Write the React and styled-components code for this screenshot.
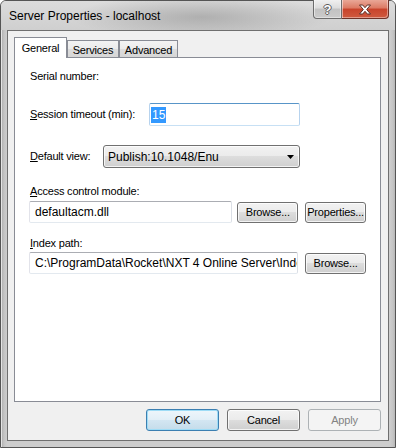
import React from 'react';
import styled, { createGlobalStyle, css } from 'styled-components';

const Global = createGlobalStyle`
  html, body { margin: 0; padding: 0; background: #fff; }
  body { font-family: "Liberation Sans", Arial, sans-serif; }
`;

const Window = styled.div`
  box-sizing: border-box;
  width: 396px;
  height: 448px;
  border: 1px solid #555;
  border-radius: 6px 6px 0 0;
  padding: 0 6px 6px;
  display: flex;
  flex-direction: column;
  background: linear-gradient(90deg, #a9a9a9 0px, #c4c4c4 3px, #cdcdcd 6px, #cdcdcd 389px, #c4c4c4 392px, #a9a9a9 396px);
  box-shadow: inset 1px 1px 0 #e4e4e4;
`;

const TitleBar = styled.div`
  height: 29px;
  display: flex;
  align-items: center;
  margin: 0 -6px;
  padding: 0 0 0 7px;
  background:
    radial-gradient(ellipse 130px 22px at 200px 16px, rgba(130,130,130,0.45), rgba(130,130,130,0) 100%),
    linear-gradient(180deg, #dcdcdc, #cfcfcf);
  border-radius: 5px 5px 0 0;
`;

const Title = styled.span`
  font-size: 12px;
  color: #000;
  padding-left: 1px;
`;

const Captions = styled.div`
  margin-left: auto;
  margin-right: 6px;
  align-self: flex-start;
  display: flex;
  margin-top: -1px;
`;

const CaptionButton = styled.div`
  box-sizing: border-box;
  height: 19px;
  width: ${p => p.$w}px;
  border: 1px solid ${p => (p.$close ? '#6e3228' : '#6c6c6c')};
  border-top: none;
  display: flex;
  align-items: center;
  justify-content: center;
  box-shadow: inset 1px 0 0 rgba(255,255,255,0.5), inset -1px -1px 0 rgba(255,255,255,0.4);
  ${p => (p.$close
    ? css`
      border-left: none;
      border-radius: 0 0 4px 0;
      background: linear-gradient(180deg, #e9a797 0%, #dc7a63 45%, #c8432b 50%, #cf5a3f 100%);
    `
    : css`
      border-radius: 0 0 0 4px;
      background: linear-gradient(180deg, #f0f0f0 0%, #dcdcdc 45%, #c2c2c2 50%, #cbcbcb 100%);
    `)}
`;

const HelpGlyph = styled.span`
  font-family: "Liberation Sans", Arial, sans-serif;
  font-weight: bold;
  font-size: 13px;
  line-height: 13px;
  color: #fff;
  text-shadow: 1px 0 0 #5c5c5c, -1px 0 0 #5c5c5c, 0 1px 0 #5c5c5c, 0 -1px 0 #5c5c5c;
  margin-top: 1px;
`;

const Client = styled.div`
  flex: 1;
  border: 1px solid #6f6f6f;
  background: #f0f0f0;
  padding: 6px 7px 9px 6px;
  display: flex;
  flex-direction: column;
  min-height: 0;
`;

const TabStrip = styled.div`
  display: flex;
  align-items: flex-end;
  height: 21px;
  margin-bottom: -1px;
  position: relative;
  z-index: 1;
`;

const Tab = styled.div`
  box-sizing: border-box;
  width: ${p => p.$w}px;
  margin-left: ${p => p.$ml || 0}px;
  border: 1px solid #898c95;
  font-size: 11px;
  letter-spacing: -0.2px;
  color: #000;
  display: flex;
  align-items: center;
  justify-content: center;
  ${p => (p.$active
    ? css`
      height: 21px;
      border-bottom: none;
      background: #fff;
      padding-bottom: 1px;
    `
    : css`
      height: 18px;
      background: linear-gradient(180deg, #f3f3f3 0%, #ebebeb 50%, #dddddd 51%, #d6d6d6 100%);
      padding-top: 1px;
    `)}
`;

const Panel = styled.div`
  flex: 1;
  background: #fff;
  border: 1px solid #898c95;
  padding: 0 14px;
  display: flex;
  flex-direction: column;
`;

const Label = styled.span`
  font-size: 11px;
  letter-spacing: -0.2px;
  line-height: 13px;
  color: #000;
  padding-left: 1px;
  margin-top: ${p => p.$mt || 0}px;
  width: ${p => (p.$w ? `${p.$w}px` : 'auto')};
  flex: none;
  box-sizing: border-box;
`;

const Row = styled.div`
  display: flex;
  align-items: center;
  margin-top: ${p => p.$mt}px;
`;

const TextBox = styled.div`
  box-sizing: border-box;
  width: ${p => p.$w}px;
  height: ${p => p.$h || 22}px;
  margin-right: ${p => p.$mr || 0}px;
  border: 1px solid;
  border-color: #abadb3 #dbdfe6 #e3e9ef #e2e3ea;
  border-radius: 2px;
  background: #fff;
  font-size: 12px;
  color: #000;
  padding-left: 5px;
  display: flex;
  align-items: center;
  white-space: nowrap;
  overflow: hidden;
  ${p => p.$focus && css`
    border-color: #5895c8 #b7d3ee #c7e0f4 #b7d3ee;
    padding-left: 1px;
  `}
`;

const Selected = styled.span`
  background: #3399ff;
  color: #fff;
  padding: 1px 1px;
  line-height: 14px;
`;

const Combo = styled.div`
  box-sizing: border-box;
  width: 197px;
  height: 23px;
  border: 1px solid #707070;
  border-radius: 3px;
  background: linear-gradient(180deg, #f2f2f2 0%, #ebebeb 49%, #dddddd 50%, #cfcfcf 100%);
  box-shadow: inset 0 0 0 1px rgba(255,255,255,0.75);
  display: flex;
  align-items: center;
  padding: 0 5px 0 4px;
  font-size: 12px;
  color: #000;
`;

const ComboText = styled.span`
  flex: 1;
  padding-top: 1px;
`;

const Button = styled.button`
  box-sizing: border-box;
  width: ${p => p.$w}px;
  height: ${p => p.$h}px;
  margin-left: ${p => p.$ml || 0}px;
  padding: 0;
  font-family: "Liberation Sans", Arial, sans-serif;
  font-size: 11px;
  letter-spacing: -0.2px;
  color: #000;
  border: 1px solid #707070;
  border-radius: 3px;
  background: linear-gradient(180deg, #f2f2f2 0%, #ebebeb 49%, #dddddd 50%, #cfcfcf 100%);
  box-shadow: inset 0 0 0 1px rgba(255,255,255,0.75);
  ${p => p.$default && css`
    border-color: #3c7fb1;
    background: linear-gradient(180deg, #eef6fb 0%, #e2eff7 49%, #d3e6f2 50%, #c4dcea 100%);
    box-shadow: inset 0 0 0 1px #9edcf6;
  `}
  ${p => p.disabled && css`
    border-color: #adb2b5;
    background: #f4f4f4;
    color: #838383;
    box-shadow: none;
  `}
`;

const Footer = styled.div`
  display: flex;
  justify-content: flex-end;
  margin-top: 7px;
`;

function CloseGlyph() {
  return (
    <svg width="14" height="11" viewBox="-1.5 -1 14 11">
      <polygon
        points="0,0 3.2,0 5.5,2.7 7.8,0 11,0 7.2,4.5 11,9 7.8,9 5.5,6.3 3.2,9 0,9 3.8,4.5"
        fill="#fff"
        stroke="#5b3028"
        strokeWidth="1"
        strokeLinejoin="round"
      />
    </svg>
  );
}

function DropArrow() {
  return (
    <svg width="7" height="4" viewBox="0 0 7 4">
      <polygon points="0,0 7,0 3.5,4" fill="#000" />
    </svg>
  );
}

export default function App() {
  return (
    <>
      <Global />
      <Window>
        <TitleBar>
          <Title>Server Properties - localhost</Title>
          <Captions>
            <CaptionButton $w={29}><HelpGlyph>?</HelpGlyph></CaptionButton>
            <CaptionButton $w={47} $close><CloseGlyph /></CaptionButton>
          </Captions>
        </TitleBar>
        <Client>
          <TabStrip>
            <Tab $w={53} $active>General</Tab>
            <Tab $w={52}>Services</Tab>
            <Tab $w={59} $ml={0}>Advanced</Tab>
          </TabStrip>
          <Panel>
            <Label $mt={12}>Serial number:</Label>
            <Row $mt={20}>
              <Label $w={120}><u>S</u>ession timeout (min):</Label>
              <TextBox $w={151} $h={23} $focus><Selected>15</Selected></TextBox>
            </Row>
            <Row $mt={19}>
              <Label $w={74}><u>D</u>efault view:</Label>
              <Combo>
                <ComboText>Publish:10.1048/Enu</ComboText>
                <DropArrow />
              </Combo>
            </Row>
            <Label $mt={17}><u>A</u>ccess control module:</Label>
            <Row $mt={3}>
              <TextBox $w={204}>defaultacm.dll</TextBox>
              <Button $w={61} $h={21} $ml={5}>Browse...</Button>
              <Button $w={61} $h={21} $ml={7}>Properties...</Button>
            </Row>
            <Label $mt={14}><u>I</u>ndex path:</Label>
            <Row $mt={2}>
              <TextBox $w={270}>C:\ProgramData\Rocket\NXT 4 Online Server\Index</TextBox>
              <Button $w={61} $h={21} $ml={7}>Browse...</Button>
            </Row>
          </Panel>
          <Footer>
            <Button $w={73} $h={22} $default>OK</Button>
            <Button $w={73} $h={22} $ml={8}>Cancel</Button>
            <Button $w={73} $h={22} $ml={8} disabled>Apply</Button>
          </Footer>
        </Client>
      </Window>
    </>
  );
}
